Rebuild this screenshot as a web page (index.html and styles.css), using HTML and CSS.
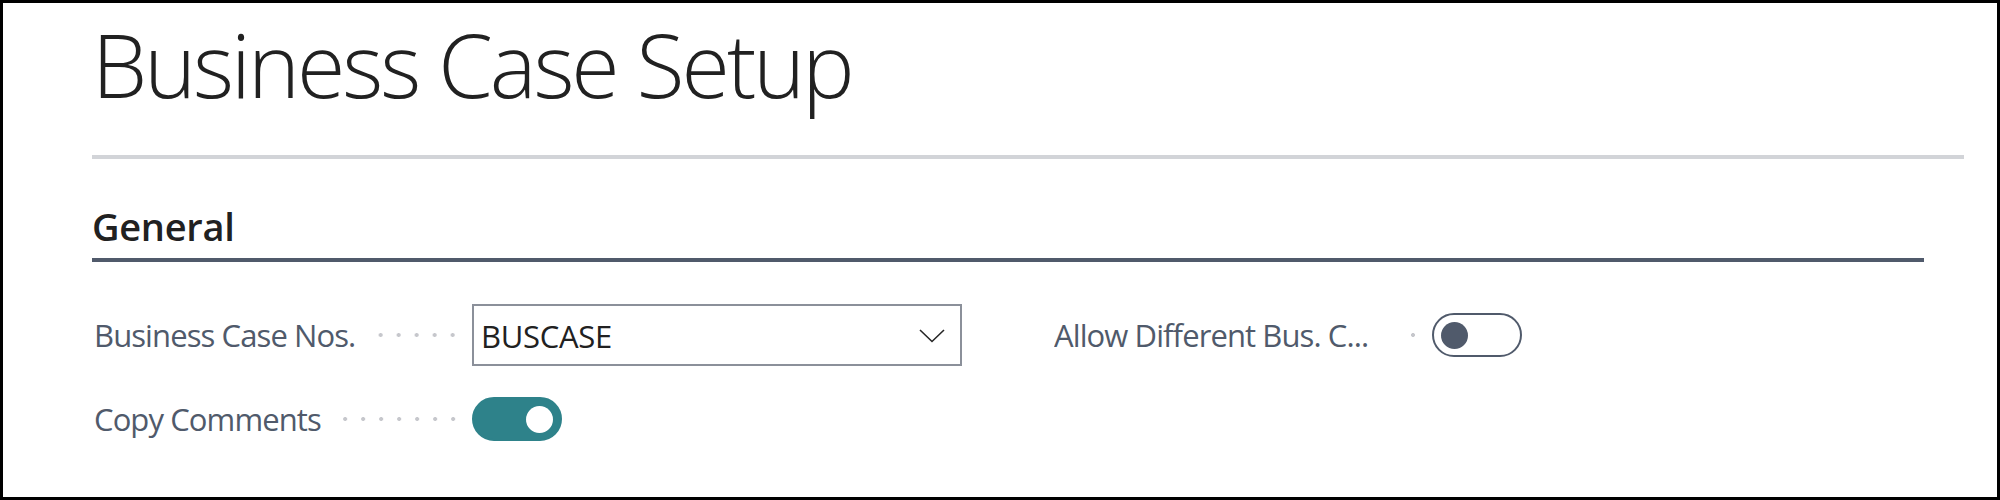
FILE: index.html
```html
<!DOCTYPE html>
<html lang="en">
<head>
<meta charset="utf-8">
<title>Business Case Setup</title>
<link rel="stylesheet" href="styles.css">
</head>
<body>
<div class="frame">
  <header class="page-header">
    <h1 class="page-title">Business Case Setup</h1>
  </header>
  <section class="group">
    <h2 class="group-title">General</h2>
    <div class="fields">
      <div class="field">
        <div class="caption"><span class="label">Business Case Nos.</span><span class="dots"></span></div>
        <div class="select">
          <span class="select-value">BUSCASE</span>
          <svg class="chevron" width="26" height="14" viewBox="0 0 26 14" aria-hidden="true"><polyline points="1,1 13,12.5 25,1" fill="none" stroke="#262626" stroke-width="1.6"/></svg>
        </div>
      </div>
      <div class="field">
        <div class="caption"><span class="label">Copy Comments</span><span class="dots"></span></div>
        <div class="toggle toggle-on"><span class="knob"></span></div>
      </div>
      <div class="field">
        <div class="caption"><span class="label label-clipped">Allow Different Bus. C...</span><span class="dots"></span></div>
        <div class="toggle toggle-off"><span class="knob"></span></div>
      </div>
    </div>
  </section>
</div>
</body>
</html>
```

FILE: styles.css
```css
html, body {
  margin: 0;
  padding: 0;
  background: #ffffff;
}

.frame {
  box-sizing: border-box;
  width: 2000px;
  height: 500px;
  border: 3px solid #000000;
  background: #ffffff;
  font-family: "Segoe UI", "Open Sans", "Noto Sans", sans-serif;
  overflow: hidden;
}

.page-header {
  margin: 0 33px 0 89px;
  padding-top: 1px;
  padding-bottom: 31px;
  border-bottom: 4px solid #d2d4d8;
}

.page-title {
  margin: 0;
  font-size: 88px;
  line-height: 120px;
  font-weight: 300;
  letter-spacing: -3px;
  color: #212121;
  white-space: nowrap;
}

.group {
  margin: 0;
}

.group-title {
  margin: 40px 73px 0 89px;
  padding-bottom: 5px;
  border-bottom: 4px solid #505a6b;
  font-size: 38px;
  line-height: 54px;
  font-weight: 600;
  letter-spacing: -0.3px;
  color: #212121;
}

.fields {
  margin: 42px 0 0 91px;
  display: grid;
  grid-template-columns: 868px 868px;
  grid-template-rows: 62px 62px;
  grid-auto-flow: column;
  column-gap: 92px;
  row-gap: 22px;
}

.field {
  display: flex;
  align-items: center;
  height: 62px;
}

.caption {
  width: 368px;
  margin-right: 10px;
  display: flex;
  align-items: center;
  flex: none;
}

.label {
  font-size: 31px;
  letter-spacing: -0.9px;
  color: #505a6b;
  white-space: nowrap;
  overflow: hidden;
  text-overflow: ellipsis;
  max-width: 328px;
  flex: none;
}

.label-clipped {
  width: 328px;
}

.dots {
  flex: 1;
  min-width: 0;
  height: 4px;
  margin-left: 20px;
  background-image: radial-gradient(circle, #c6c7cc 1.6px, rgba(198, 199, 204, 0) 2.3px);
  background-size: 18px 4px;
  background-position: right center;
  background-repeat: repeat-x;
}

.select {
  box-sizing: border-box;
  width: 490px;
  height: 62px;
  border: 2px solid #8b909a;
  display: flex;
  align-items: center;
  justify-content: space-between;
  padding: 2px 15px 0 7px;
}

.select-value {
  font-size: 31px;
  letter-spacing: -0.3px;
  color: #212121;
}

.chevron {
  display: block;
}

.toggle {
  box-sizing: border-box;
  width: 90px;
  height: 44px;
  border-radius: 22px;
  border: 2px solid #505a6b;
  display: flex;
  align-items: center;
  padding: 0 7px;
}

.knob {
  width: 27px;
  height: 27px;
  border-radius: 50%;
}

.toggle-on {
  background: #2e828a;
  border-color: #2e828a;
  justify-content: flex-end;
}

.toggle-on .knob {
  background: #ffffff;
}

.toggle-off {
  background: #ffffff;
  justify-content: flex-start;
}

.toggle-off .knob {
  background: #505a6b;
}
```
